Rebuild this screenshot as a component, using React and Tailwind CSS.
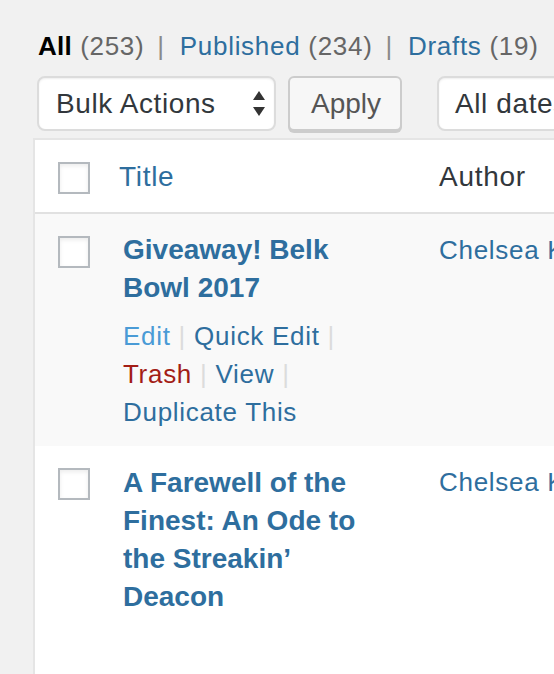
import React from "react";

const font = { fontFamily: '"Liberation Sans", Arial, sans-serif' };

function Checkbox() {
  return (
    <div className="w-[32px] h-[32px] border-2 border-[#b4b9be] bg-white shadow-[inset_0_2px_4px_rgba(0,0,0,0.08)] shrink-0" />
  );
}

function Sep() {
  return <span className="mx-[8px] text-[#dcdcdc]">|</span>;
}

export default function App() {
  return (
    <div
      className="w-[554px] h-[674px] overflow-hidden bg-[#f1f1f1] text-[#32373c]"
      style={font}
    >
      {/* status links */}
      <div className="pt-[27px] pl-[38px] flex whitespace-nowrap text-[26px] leading-[38px] tracking-[0.7px]">
        <span className="font-bold text-black tracking-[0.3px]">All</span>
        <span className="ml-[8px] text-[#666]">(253)</span>
        <span className="ml-[13px] mr-[15px] text-[#8a8a8a]">|</span>
        <span className="text-[#2e6e9e]">Published</span>
        <span className="ml-[8px] text-[#666]">(234)</span>
        <span className="ml-[13px] mr-[15px] text-[#8a8a8a]">|</span>
        <span className="text-[#2e6e9e]">Drafts</span>
        <span className="ml-[8px] text-[#666]">(19)</span>
      </div>

      {/* bulk actions row */}
      <div className="mt-[11px] pl-[37px] flex items-start whitespace-nowrap">
        <div className="shrink-0 w-[239px] h-[55px] rounded-[8px] border-2 border-[#dcdcdc] bg-white shadow-[inset_0_1px_2px_rgba(0,0,0,0.07)] flex items-center justify-between pl-[17px] pr-[9px]">
          <span className="text-[28px] tracking-[0.6px] text-[#32373c] leading-none">Bulk Actions</span>
          <svg width="12" height="26" viewBox="0 0 12 26">
            <path d="M6 0 L12 9 L0 9 Z" fill="#333" />
            <path d="M0 16 L12 16 L6 25 Z" fill="#333" />
          </svg>
        </div>
        <div className="shrink-0 ml-[12px] w-[114px] h-[55px] rounded-[6px] border-2 border-[#cccccc] bg-[#f7f7f7] shadow-[0_2px_0_#cccccc] flex items-center justify-center">
          <span className="text-[28px] text-[#555] leading-none pl-[2px]">Apply</span>
        </div>
        <div className="shrink-0 ml-[35px] w-[200px] h-[55px] rounded-[8px] border-2 border-[#dcdcdc] bg-white shadow-[inset_0_1px_2px_rgba(0,0,0,0.07)] flex items-center pl-[16px]">
          <span className="text-[28px] tracking-[0.6px] text-[#32373c] leading-none">All dates</span>
        </div>
      </div>

      {/* table */}
      <div className="mt-[7px] ml-[33px] w-[600px] border-t-2 border-l-2 border-[#e5e5e5] bg-white">
        {/* header */}
        <div className="h-[74px] border-b-2 border-[#e1e1e1] bg-white flex items-start whitespace-nowrap">
          <div className="shrink-0 w-[84px] pl-[23px] pt-[22px]">
            <Checkbox />
          </div>
          <div className="shrink-0 w-[320px] pt-[18px] text-[28px] leading-[38px] tracking-[0.7px] text-[#2e6e9e]">
            Title
          </div>
          <div className="pt-[18px] text-[28px] leading-[38px] tracking-[0.7px] text-[#32373c]">
            Author
          </div>
        </div>

        {/* row 1 */}
        <div className="h-[232px] bg-[#f9f9f9] flex items-start whitespace-nowrap">
          <div className="shrink-0 w-[88px] pl-[23px] pt-[22px]">
            <Checkbox />
          </div>
          <div className="shrink-0 w-[316px] pt-[17px]">
            <div className="text-[28px] leading-[38px] font-bold text-[#2e6e9e]">
              <div>Giveaway! Belk</div>
              <div>Bowl 2017</div>
            </div>
            <div className="mt-[10px] text-[26px] leading-[38px] tracking-[0.7px]">
              <div>
                <span className="text-[#4a9bd6]">Edit</span>
                <Sep />
                <span className="text-[#2e6e9e]">Quick Edit</span>
                <Sep />
              </div>
              <div>
                <span className="text-[#a31d16]">Trash</span>
                <Sep />
                <span className="text-[#2e6e9e]">View</span>
                <Sep />
              </div>
              <div className="text-[#2e6e9e]">Duplicate This</div>
            </div>
          </div>
          <div className="pt-[17px] text-[26px] leading-[38px] tracking-[0.7px] text-[#2e6e9e]">
            Chelsea K
          </div>
        </div>

        {/* row 2 */}
        <div className="h-[240px] bg-white flex items-start whitespace-nowrap">
          <div className="shrink-0 w-[88px] pl-[23px] pt-[22px]">
            <Checkbox />
          </div>
          <div className="shrink-0 w-[316px] pt-[18px] text-[28px] leading-[38px] font-bold text-[#2e6e9e]">
            <div>A Farewell of the</div>
            <div>Finest: An Ode to</div>
            <div>the Streakin’</div>
            <div>Deacon</div>
          </div>
          <div className="pt-[17px] text-[26px] leading-[38px] tracking-[0.7px] text-[#2e6e9e]">
            Chelsea K
          </div>
        </div>
      </div>
    </div>
  );
}
